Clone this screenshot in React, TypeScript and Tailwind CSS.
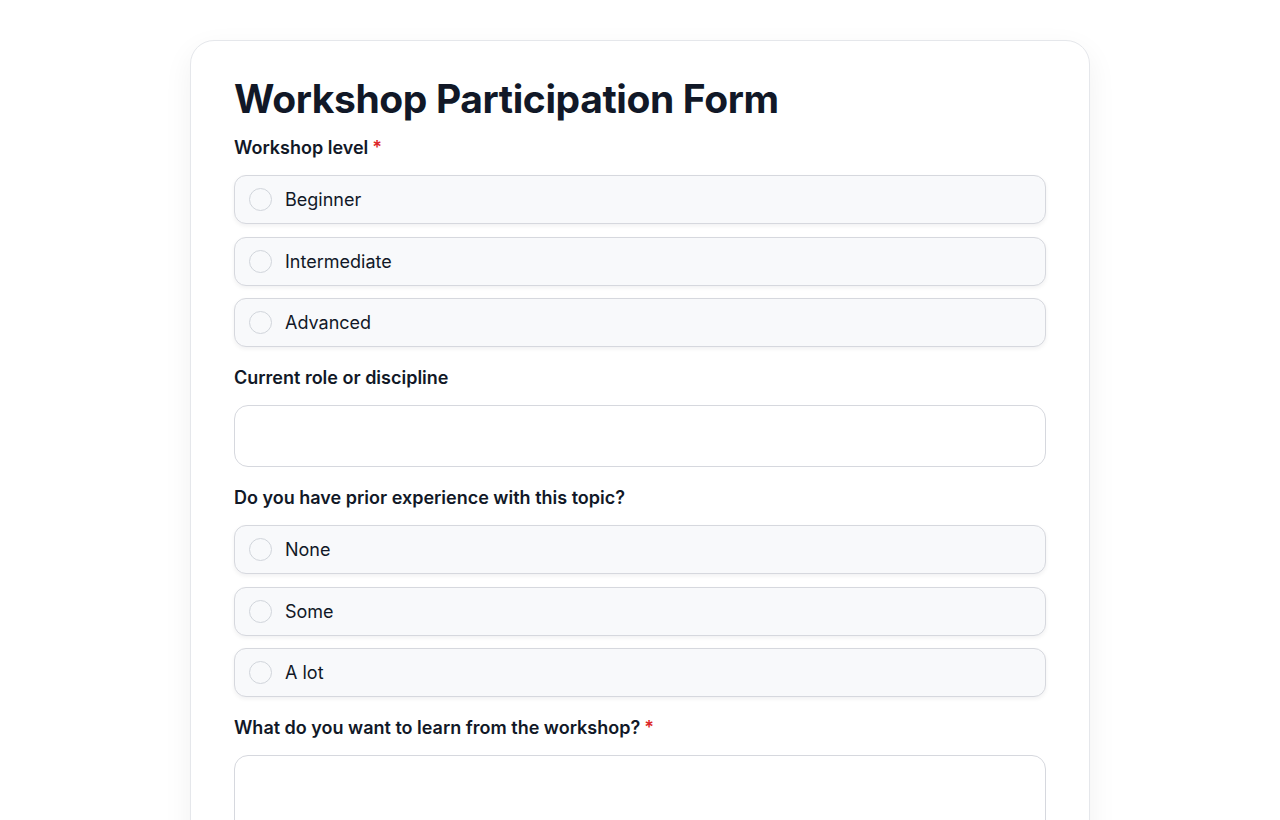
import React from 'react'

type Option = { value: string; label: string }

const levels: Option[] = [
  { value: 'beginner', label: 'Beginner' },
  { value: 'intermediate', label: 'Intermediate' },
  { value: 'advanced', label: 'Advanced' },
]

const experience: Option[] = [
  { value: 'none', label: 'None' },
  { value: 'some', label: 'Some' },
  { value: 'lot', label: 'A lot' },
]

const FieldLabel: React.FC<{ text: string; required?: boolean; htmlFor?: string }> = ({ text, required, htmlFor }) => (
  <label htmlFor={htmlFor} className="block text-[18px] leading-[28px] font-semibold text-[#111827] mb-[13px]">
    {text}
    {required && <span className="text-[#dc2626] ml-1">*</span>}
  </label>
)

const RadioGroup: React.FC<{ name: string; options: Option[] }> = ({ name, options }) => (
  <div className="flex flex-col gap-[12.5px]">
    {options.map((opt) => (
      <label
        key={opt.value}
        className="flex items-center h-[49px] px-[14px] rounded-[12px] border border-[#d6d8de] bg-[#f8f9fb] shadow-[0_2px_4px_rgba(17,24,39,0.06)] cursor-pointer"
      >
        <input type="radio" name={name} value={opt.value} className="peer sr-only" />
        <span className="w-[23px] h-[23px] rounded-full border border-[#d1d5db] bg-[#f8f9fb] shrink-0" />
        <span className="ml-[13px] text-[18px] text-[#111827]">{opt.label}</span>
      </label>
    ))}
  </div>
)

export default function App() {
  return (
    <div className="min-h-screen bg-white pt-[40px] px-4 font-['Inter',_'Liberation_Sans',_sans-serif]">
      <div className="mx-auto w-[900px] rounded-[24px] border border-[#e5e7eb] bg-white px-[43px] pt-[34px] pb-10 shadow-[0_10px_30px_rgba(17,24,39,0.06)]">
        <h1 className="text-[39px] leading-[48px] font-bold tracking-[-0.01em] text-[#111827] mb-[11px]">
          Workshop Participation Form
        </h1>

        <div className="flex flex-col gap-[17px]">
          <div>
            <FieldLabel text="Workshop level" required />
            <RadioGroup name="level" options={levels} />
          </div>

          <div>
            <FieldLabel text="Current role or discipline" htmlFor="role" />
            <input
              id="role"
              type="text"
              className="block w-full h-[62px] rounded-[14px] border border-[#d6d8de] bg-white px-4 text-[18px] outline-none"
            />
          </div>

          <div>
            <FieldLabel text="Do you have prior experience with this topic?" />
            <RadioGroup name="experience" options={experience} />
          </div>

          <div>
            <FieldLabel text="What do you want to learn from the workshop?" required htmlFor="learn" />
            <textarea
              id="learn"
              rows={5}
              className="block w-full h-[150px] rounded-[14px] border border-[#d6d8de] bg-white px-4 py-3 text-[18px] outline-none resize-none"
            />
          </div>
        </div>
      </div>
    </div>
  )
}
